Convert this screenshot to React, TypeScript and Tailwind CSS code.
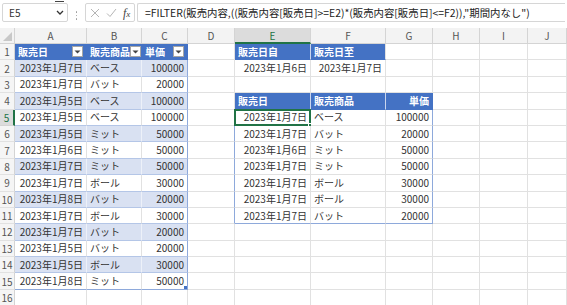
import React from "react";

const COLS = ["A", "B", "C", "D", "E", "F", "G", "H", "I", "J"];

// source table A1:C15
const sales: [string, string, string][] = [
  ["2023年1月7日", "ベース", "100000"],
  ["2023年1月7日", "バット", "20000"],
  ["2023年1月5日", "ベース", "100000"],
  ["2023年1月5日", "ベース", "100000"],
  ["2023年1月5日", "ミット", "50000"],
  ["2023年1月6日", "ミット", "50000"],
  ["2023年1月7日", "ミット", "50000"],
  ["2023年1月7日", "ボール", "30000"],
  ["2023年1月8日", "バット", "20000"],
  ["2023年1月7日", "ボール", "30000"],
  ["2023年1月7日", "バット", "20000"],
  ["2023年1月5日", "バット", "20000"],
  ["2023年1月5日", "ボール", "30000"],
  ["2023年1月8日", "ミット", "50000"],
];

// FILTER result E5:G11
const filtered: [string, string, string][] = [
  ["2023年1月7日", "ベース", "100000"],
  ["2023年1月7日", "バット", "20000"],
  ["2023年1月6日", "ミット", "50000"],
  ["2023年1月7日", "ミット", "50000"],
  ["2023年1月7日", "ボール", "30000"],
  ["2023年1月7日", "ボール", "30000"],
  ["2023年1月7日", "バット", "20000"],
];

interface CellInfo {
  text?: string;
  right?: boolean;
  cls: string;
  filter?: boolean;
  selected?: boolean;
}

const GRID = "bg-white border-r-[#E1E1E1] border-b-[#E1E1E1] text-[#333]";
const HEAD = "bg-[#4472C4] text-white font-bold border-b-[#4472C4]";

function getCell(r: number, c: number): CellInfo {
  // table 1
  if (c <= 2 && r <= 15) {
    if (r === 1) {
      return {
        text: ["販売日", "販売商品", "単価"][c],
        cls: `${HEAD} border-r-[#4472C4]`,
        filter: true,
      };
    }
    const row = sales[r - 2];
    const banded = r % 2 === 0;
    const bg = banded ? "bg-[#D9E1F2]" : "bg-white";
    const rb =
      c === 2 ? "border-r-[#8EA9DB]" : banded ? "border-r-[#EDF1F9]" : "border-r-[#E1E1E1]";
    const bb = r === 15 ? "border-b-[#8EA9DB]" : "border-b-[#B4C6E7]";
    return { text: row[c], right: c !== 1, cls: `${bg} ${rb} ${bb} text-[#333]` };
  }
  if (c === 3 && r >= 5 && r <= 11) {
    return { cls: "bg-white border-r-[#8EA9DB] border-b-[#E1E1E1]" };
  }
  if ((c === 4 || c === 5) && r === 1) {
    return {
      text: c === 4 ? "販売日自" : "販売日至",
      cls: `${HEAD} ${c === 4 ? "border-r-[#C9D5EE]" : "border-r-[#E1E1E1]"}`,
    };
  }
  if ((c === 4 || c === 5) && r === 2) {
    return { text: c === 4 ? "2023年1月6日" : "2023年1月7日", right: true, cls: GRID };
  }
  if (c >= 4 && c <= 6 && r === 4) {
    return {
      text: ["販売日", "販売商品", "単価"][c - 4],
      right: c === 6,
      cls: `${HEAD} ${c === 6 ? "border-r-[#4472C4]" : "border-r-[#C9D5EE]"}`,
    };
  }
  if (c >= 4 && c <= 6 && r >= 5 && r <= 11) {
    const row = filtered[r - 5];
    const rb = c === 6 ? "border-r-[#8EA9DB]" : "border-r-[#E1E1E1]";
    const bb = r === 11 ? "border-b-[#8EA9DB]" : "border-b-[#E1E1E1]";
    return {
      text: row[c - 4],
      right: c !== 5,
      cls: `bg-white ${rb} ${bb} text-[#333]`,
      selected: r === 5 && c === 4,
    };
  }
  return { cls: GRID };
}

const FilterButton = () => (
  <span className="ml-auto flex h-[11px] w-[11px] shrink-0 items-center justify-center border border-[#A6A6A6] bg-white">
    <svg width="7" height="4" viewBox="0 0 7 4">
      <path d="M0.5 0.5 L3.5 3.5 L6.5 0.5 Z" fill="#444" />
    </svg>
  </span>
);

const FormulaBar = () => (
  <div className="flex h-[28px] items-start gap-[2px] bg-white px-[2px] pt-[3px]">
    <div className="relative flex h-[19px] w-[66px] items-center rounded-[2px] border border-[#D6D6D6] bg-white pl-[6px] text-[10px] text-[#333]">
      E5
      <span className="absolute right-[3px] top-[-3px] h-[1px] w-[9px] bg-[#444]" />
      <svg className="ml-auto mr-[3px]" width="8" height="5" viewBox="0 0 8 5">
        <path d="M1 1 L4 4 L7 1" fill="none" stroke="#333" strokeWidth="1.3" />
      </svg>
    </div>
    <div className="flex w-[13px] flex-col items-center justify-center gap-[2px] self-center">
      <span className="h-[1.5px] w-[1.5px] rounded-full bg-[#999]" />
      <span className="h-[1.5px] w-[1.5px] rounded-full bg-[#999]" />
      <span className="h-[1.5px] w-[1.5px] rounded-full bg-[#999]" />
    </div>
    <div className="flex h-[19px] w-[50px] items-center gap-[6px] rounded-[2px] border border-[#D6D6D6] bg-white pl-[4px]">
      <svg width="10" height="10" viewBox="0 0 10 10">
        <path d="M1 1 L9 9 M9 1 L1 9" stroke="#B5B5B5" strokeWidth="1" />
      </svg>
      <svg width="11" height="10" viewBox="0 0 11 10">
        <path d="M1 5.5 L4 8.5 L10 1" fill="none" stroke="#B5B5B5" strokeWidth="1" />
      </svg>
      <span className="font-['Liberation_Serif',serif] text-[12px] italic leading-none text-[#444]">
        f<span className="text-[9px]">x</span>
      </span>
    </div>
    <div className="flex h-[19px] flex-1 items-center rounded-l-[2px] border border-r-0 border-[#D6D6D6] bg-white pl-[7px] text-[10.4px] text-[#222] whitespace-nowrap">
      =FILTER(販売内容,((販売内容[販売日]&gt;=E2)*(販売内容[販売日]&lt;=F2)),"期間内なし")
    </div>
  </div>
);

export default function App() {
  const rows = Array.from({ length: 16 }, (_, i) => i + 1);
  return (
    <div className="h-[305px] w-[567px] overflow-hidden bg-white font-['Noto_Sans_CJK_JP',sans-serif]">
      <FormulaBar />
      <div className="grid grid-cols-[15px_72px_55px_46px_47px_76px_75px_47px_47px_48px_1fr]">
        {/* corner */}
        <div className="relative h-[16px] border-b border-r border-[#D4D4D4] bg-[#F3F3F3]">
          <svg className="absolute bottom-[2px] right-[2px]" width="9" height="9" viewBox="0 0 9 9">
            <path d="M9 0 L9 9 L0 9 Z" fill="#C8C8C8" />
          </svg>
        </div>
        {COLS.map((col) => (
          <div
            key={col}
            className={
              col === "E"
                ? "flex h-[16px] items-center justify-center border-b-2 border-r border-b-[#217346] border-r-[#D4D4D4] bg-[#DCDCDC] text-[10px] text-[#217346]"
                : "flex h-[16px] items-center justify-center border-b border-r border-[#D4D4D4] bg-[#F3F3F3] text-[10px] text-[#555]"
            }
          >
            {col}
          </div>
        ))}

        {rows.map((r) => (
          <React.Fragment key={r}>
            <div
              className={
                r === 5
                  ? "flex h-[16.4px] items-center justify-center border-b border-r-2 border-b-[#D4D4D4] border-r-[#217346] bg-[#DCDCDC] text-[10px] text-[#217346]"
                  : "flex h-[16.4px] items-center justify-center border-b border-r border-b-[#E1E1E1] border-r-[#D4D4D4] bg-[#F5F5F5] text-[10px] text-[#555]"
              }
            >
              {r}
            </div>
            {COLS.map((_, c) => {
              const cell = getCell(r, c);
              return (
                <div
                  key={c}
                  className={`relative flex h-[16.4px] items-center whitespace-nowrap border-b border-r px-[3px] text-[10px] ${cell.cls} ${
                    cell.right ? "justify-end" : "justify-start"
                  }`}
                >
                  {cell.text && <span className="leading-none">{cell.text}</span>}
                  {cell.filter && <FilterButton />}
                  {r === 15 && c === 2 && (
                    <span className="absolute bottom-0 right-0 h-[3px] w-[3px] bg-[#4472C4]" />
                  )}
                  {cell.selected && (
                    <>
                      <span className="pointer-events-none absolute -left-px -top-px bottom-[-1px] right-[-1px] border-2 border-[#217346]" />
                      <span className="absolute bottom-[-3px] right-[-3px] h-[5px] w-[5px] border border-white bg-[#217346]" />
                    </>
                  )}
                </div>
              );
            })}
          </React.Fragment>
        ))}
      </div>
    </div>
  );
}
